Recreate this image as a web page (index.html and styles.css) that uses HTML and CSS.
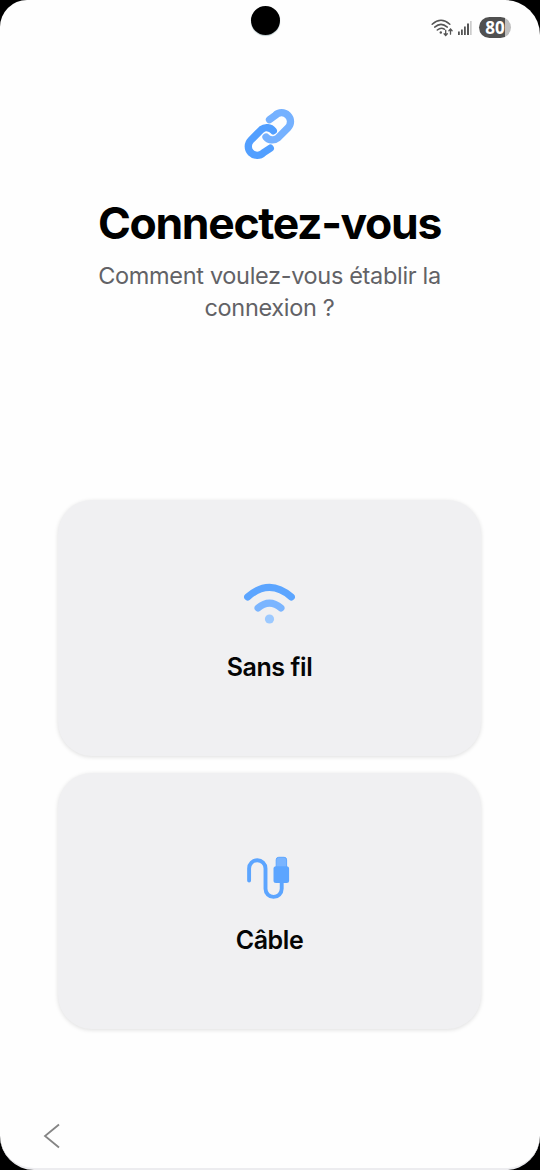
FILE: index.html
```html
<!DOCTYPE html>
<html lang="fr">
<head>
<meta charset="utf-8">
<title>Connectez-vous</title>
<link rel="stylesheet" href="styles.css">
</head>
<body>
<div class="screen">
  <div class="camera"></div>
  <header class="status">
    <svg class="status-wifi" viewBox="0 0 23 18" fill="none" stroke="#555" stroke-width="1.5" stroke-linecap="round">
      <path d="M1.2 5.2Q10 -2.7 18.8 5.2M3.7 8.1Q10 2.6 16.3 8.1M6.3 11Q10 7.8 13.3 10.2"/>
      <circle cx="9.8" cy="13.5" r="1.2" fill="#555" stroke="none"/>
      <path d="M14.7 11.2v5m-1.6-1.5 1.6 1.8 1.6-1.8M19.5 15.2v-5m-1.6 1.5 1.6-1.8 1.6 1.8" stroke-width="1.3"/>
    </svg>
    <svg class="status-signal" viewBox="0 0 14 16" fill="#555">
      <path d="M0 11.6h1.8V15H0zM3 9.5h1.8V15H3zM6 6.5h1.8V15H6zM9 3.5h2V15H9z"/>
      <path d="M12 1h1.7v14H12z" fill="#ccc"/>
    </svg>
    <div class="battery">80</div>
  </header>
  <main class="content">
    <svg class="icon-link" viewBox="241 106 57 56" fill="none" stroke-width="7.3" stroke-linecap="round" stroke-linejoin="round">
      <path stroke="#75b1ff" d="M269.5 119.7L275.3 115.3A8.9 8.9 0 0 1 287.9 127.9L277.8 138A8.5 8.5 0 0 1 266 137"/>
      <path stroke="#529fff" d="M273.3 130.8A8.5 8.5 0 0 0 261.5 129.5L251 140A8.9 8.9 0 0 0 263.4 152.8L270.3 148.2"/>
    </svg>
    <h1 class="title">Connectez-vous</h1>
    <p class="subtitle">Comment voulez-vous établir la<br>connexion ?</p>
    <div class="cards">
      <section class="card">
        <svg class="card-icon" viewBox="241.8 576 56 56" fill="none" stroke-width="7" stroke-linecap="round">
          <path stroke="#5ca5ff" d="M247.4 597Q269.3 577.8 291.2 597"/>
          <path stroke="#7bb5ff" d="M257.8 608Q269.3 598.4 280.8 608"/>
          <circle cx="269.3" cy="619" r="4.6" fill="#9cc9ff"/>
        </svg>
        <h2 class="card-label">Sans fil</h2>
      </section>
      <section class="card">
        <svg class="card-icon" viewBox="241.8 848.7 56 56" fill="none">
          <path stroke="#5ca5ff" stroke-width="3.9" stroke-linecap="round" d="M248.9 880.2V868.1A8.2 8.2 0 0 1 265.3 868.1V888.5A8.1 8.1 0 0 0 281.5 888.5V881"/>
          <rect x="276" y="857" width="10.4" height="13" rx="2.5" fill="#79b4ff" stroke="#5ca5ff"/>
          <rect x="273.3" y="866" width="15.6" height="16.7" rx="2.5" fill="#5ca5ff"/>
        </svg>
        <h2 class="card-label">Câble</h2>
      </section>
    </div>
  </main>
  <footer class="footer">
    <svg class="back" viewBox="0 0 18 26" fill="none" stroke="#858585" stroke-width="1.8"><path d="M16 1.5L2 13L16 24.5"/></svg>
  </footer>
</div>
</body>
</html>
```
FILE: styles.css
```css
body { margin: 0; background: #000; }
.screen {
  position: relative;
  display: flex;
  flex-direction: column;
  width: 540px;
  height: 1170px;
  box-sizing: border-box;
  overflow: hidden;
  background: #fefefe;
  border-bottom: 2px solid #ececef;
  border-radius: 27px 35px 34px 34px;
  font-family: Inter, "Open Sans", sans-serif;
}
.camera {
  position: absolute;
  left: 251px;
  top: 6px;
  width: 29px;
  height: 29px;
  border-radius: 50%;
  background: #000;
  box-shadow: 0 1px 1px #b6c6c9;
}
.status {
  display: flex;
  justify-content: flex-end;
  align-items: center;
  height: 55px;
  padding-right: 29px;
}
.status-wifi { width: 23px; height: 18px; margin-right: 4px; }
.status-signal { width: 14px; height: 16px; margin-right: 7px; }
.battery {
  width: 32px;
  height: 21px;
  border-radius: 10.5px;
  background: linear-gradient(90deg, #505050 81%, #bfbfbf 81%);
  color: #fff;
  font: 700 17px/21px "Open Sans", sans-serif;
  text-align: center;
}
.content { display: flex; flex-direction: column; align-items: center; padding: 51px 1px 0 0; }
.icon-link { width: 57px; height: 56px; }
.title {
  margin: 33px 0 0;
  font-size: 44.5px;
  line-height: 56px;
  font-weight: 700;
  letter-spacing: -1.35px;
  color: #000;
  white-space: nowrap;
}
.subtitle {
  margin: 9px 0 0;
  font-size: 23.5px;
  line-height: 32px;
  color: #626266;
  text-align: center;
  letter-spacing: -.33px;
  white-space: nowrap;
}
.cards { display: flex; flex-direction: column; gap: 17px; margin-top: 176px; }
.card {
  display: flex;
  flex-direction: column;
  align-items: center;
  box-sizing: border-box;
  width: 423px;
  height: 256px;
  padding-top: 76px;
  border-radius: 34px;
  background: #f0f0f2;
  box-shadow: 0 1px 4px rgba(0, 0, 0, .13);
}
.card-icon { width: 56px; height: 56px; }
.card-label { margin: 19px 0 0; font-size: 25px; line-height: 32px; font-weight: 600; letter-spacing: -.4px; color: #050505; }
.footer { margin-top: auto; padding: 0 0 19px 43px; }
.back { display: block; width: 18px; height: 26px; }
```
